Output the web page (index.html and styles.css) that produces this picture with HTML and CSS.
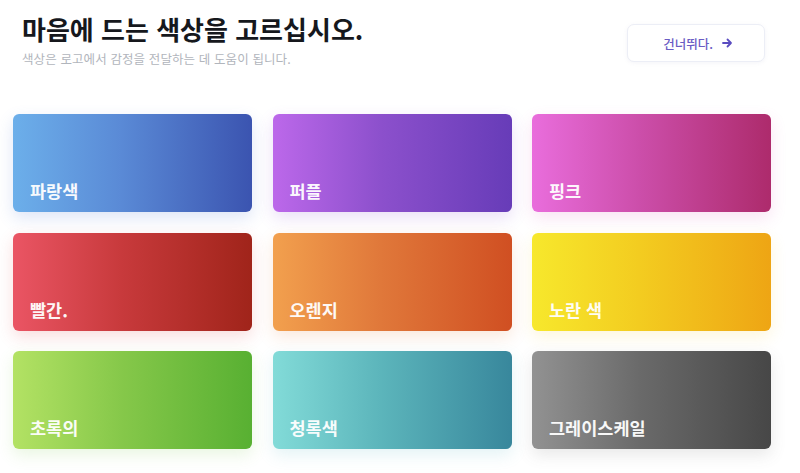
FILE: index.html
```html
<!DOCTYPE html>
<html lang="ko">
<head>
<meta charset="utf-8">
<link rel="stylesheet" href="styles.css">
</head>
<body>
<div class="page">
  <header class="head">
    <div class="titles">
      <h1 class="title">마음에 드는 색상을 고르십시오.</h1>
      <p class="sub">색상은 로고에서 감정을 전달하는 데 도움이 됩니다.</p>
    </div>
    <button class="skip">건너뛰다.
      <svg class="arrow" width="11" height="10" viewBox="0 0 11 10"><path d="M1 5h8M5.5 1.5L9 5 5.5 8.5" fill="none" stroke="currentColor" stroke-width="1.8" stroke-linecap="round" stroke-linejoin="round"/></svg>
    </button>
  </header>
  <main class="grid">
    <div class="card blue"><span>파랑색</span></div>
    <div class="card purple"><span>퍼플</span></div>
    <div class="card pink"><span>핑크</span></div>
    <div class="card red"><span>빨간.</span></div>
    <div class="card orange"><span>오렌지</span></div>
    <div class="card yellow"><span>노란 색</span></div>
    <div class="card green"><span>초록의</span></div>
    <div class="card teal"><span>청록색</span></div>
    <div class="card gray"><span>그레이스케일</span></div>
  </main>
</div>
</body>
</html>
```

FILE: styles.css
```css
* { box-sizing: border-box; }
html, body { margin: 0; padding: 0; background: #ffffff; }
body {
  font-family: "Noto Sans CJK KR", "Noto Sans", sans-serif;
  width: 800px;
  height: 473px;
  overflow: hidden;
}
.page {
  padding: 13px 29px 0 13px;
}
.head {
  display: flex;
  justify-content: space-between;
  align-items: flex-start;
  padding: 0 6px 0 9px;
}
.title {
  margin: 0;
  font-size: 26px;
  line-height: 32px;
  font-weight: 700;
  color: #16181d;
  letter-spacing: 0;
}
.sub {
  margin: 5px 0 0 0;
  font-size: 12.5px;
  line-height: 17px;
  color: #b1b5bc;
  letter-spacing: 0.1px;
}
.skip {
  margin-top: 11px;
  width: 138px;
  height: 38px;
  border: 1px solid #eceef6;
  border-radius: 7px;
  background: #fff;
  box-shadow: 0 1px 4px rgba(120, 120, 170, 0.08);
  color: #6a5cc4;
  font-family: "Noto Sans CJK KR", sans-serif;
  font-size: 12.5px;
  font-weight: 500;
  display: flex;
  align-items: center;
  justify-content: center;
  gap: 9px;
  padding: 0 0 0 4px;
}
.arrow { color: #5a4cc0; }
.grid {
  margin-top: 47px;
  display: grid;
  grid-template-columns: repeat(3, 239px);
  column-gap: 20.5px;
  row-gap: 20.5px;
}
.card {
  height: 98px;
  border-radius: 6px;
  display: flex;
  align-items: flex-end;
  padding: 0 0 10px 17px;
  color: #fff;
  font-size: 17.5px;
  font-weight: 700;
  line-height: 22px;
}
.card span { opacity: 0.95; }
.blue { background: linear-gradient(90deg, #6cafea, #5a8ad6 45%, #3b54b0); box-shadow: 0 6px 16px rgba(70, 110, 210, 0.18); }
.purple { background: linear-gradient(90deg, #bc68ea, #8c50cc 45%, #673cb8); box-shadow: 0 6px 16px rgba(140, 80, 210, 0.18); }
.pink { background: linear-gradient(90deg, #e96ddc, #cc4eaa 45%, #ad2b6c); box-shadow: 0 6px 16px rgba(220, 80, 180, 0.16); }
.red { background: linear-gradient(90deg, #ea5564, #c83a3c 45%, #a0241a); box-shadow: 0 6px 16px rgba(220, 70, 70, 0.18); }
.orange { background: linear-gradient(90deg, #f2a04e, #e0783a 45%, #d04f22); box-shadow: 0 6px 16px rgba(230, 130, 60, 0.18); }
.yellow { background: linear-gradient(90deg, #f7e82c, #f3cc20 45%, #eea514); box-shadow: 0 6px 16px rgba(240, 200, 40, 0.16); }
.green { background: linear-gradient(90deg, #b3e264, #86c84a 45%, #58b032); box-shadow: 0 6px 16px rgba(120, 200, 70, 0.16); }
.teal { background: linear-gradient(90deg, #82dbd8, #5cb5bb 45%, #38879c); box-shadow: 0 6px 16px rgba(80, 180, 190, 0.16); }
.gray { background: linear-gradient(90deg, #929292, #6a6a6a 45%, #474747); box-shadow: 0 6px 16px rgba(90, 90, 90, 0.14); }
```
